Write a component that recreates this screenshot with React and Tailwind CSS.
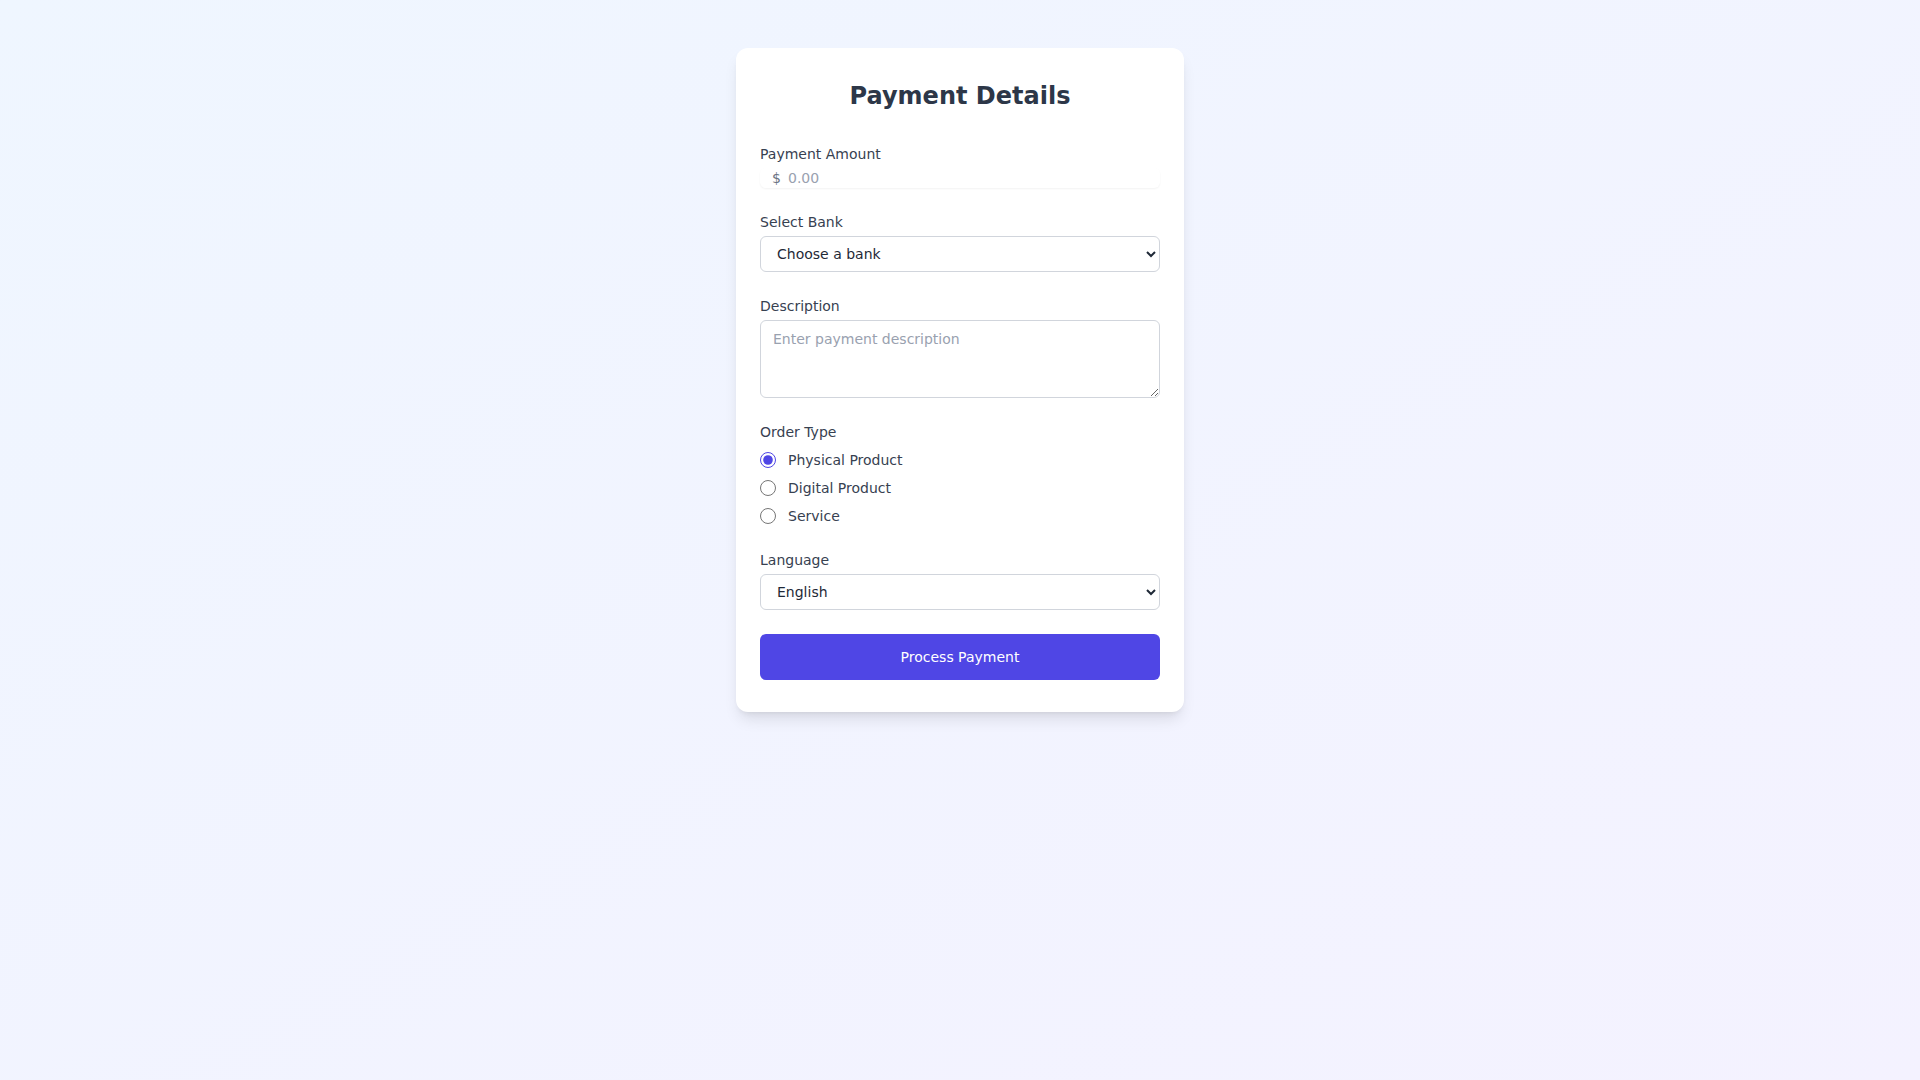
import React, { useState } from "react"

export default function App() {
    const [orderType, setOrderType] = useState("physical")

    return (
        <div className="min-h-screen bg-gradient-to-br from-[#eff6ff] to-[#f4f2ff] pt-12 font-['DejaVu_Sans',sans-serif]">
            <div className="mx-auto max-w-md rounded-xl bg-white px-6 pt-8 pb-8 shadow-lg">
                <h2 className="mb-8 text-center text-2xl font-bold text-[#2d3748]">Payment Details</h2>

                <form className="space-y-6" onSubmit={(e) => e.preventDefault()}>
                    <div>
                        <label className="block text-sm text-[#374151]">Payment Amount</label>
                        <div className="relative mt-1 rounded-md shadow-xs">
                            <span className="pointer-events-none absolute inset-y-0 left-0 flex items-center pl-3 text-sm text-gray-500">$</span>
                            <input
                                type="text"
                                placeholder="0.00"
                                className="block w-full rounded-md border-0 pl-7 pr-12 text-sm outline-none placeholder:text-gray-400"
                            />
                        </div>
                    </div>

                    <div>
                        <label className="mb-1 block text-sm text-[#374151]">Select Bank</label>
                        <select className="block h-9 w-full rounded-md border border-gray-300 bg-white px-3 text-sm text-[#1f2937]">
                            <option>Choose a bank</option>
                            <option>Chase</option>
                            <option>Bank of America</option>
                            <option>Wells Fargo</option>
                        </select>
                    </div>

                    <div>
                        <label className="mb-1 block text-sm text-[#374151]">Description</label>
                        <textarea
                            rows={3}
                            placeholder="Enter payment description"
                            className="block w-full rounded-md border border-gray-300 px-3 py-2 text-sm placeholder:text-gray-400"
                        ></textarea>
                    </div>

                    <div>
                        <label className="mb-2 block text-sm text-[#374151]">Order Type</label>
                        <div className="space-y-2">
                            {[
                                ["physical", "Physical Product"],
                                ["digital", "Digital Product"],
                                ["service", "Service"],
                            ].map(([value, text]) => (
                                <label key={value} className="flex h-5 items-center">
                                    <input
                                        type="radio"
                                        name="orderType"
                                        value={value}
                                        checked={orderType === value}
                                        onChange={() => setOrderType(value)}
                                        className="h-4 w-4 accent-[#4f46e5]"
                                    />
                                    <span className="ml-3 text-sm text-[#374151]">{text}</span>
                                </label>
                            ))}
                        </div>
                    </div>

                    <div>
                        <label className="mb-1 block text-sm text-[#374151]">Language</label>
                        <select className="block h-9 w-full rounded-md border border-gray-300 bg-white px-3 text-sm text-[#1f2937]">
                            <option>English</option>
                            <option>Spanish</option>
                            <option>French</option>
                        </select>
                    </div>

                    <button type="submit" className="h-[46px] w-full rounded-md bg-[#4f46e5] text-sm text-white">
                        Process Payment
                    </button>
                </form>
            </div>
        </div>
    )
}
